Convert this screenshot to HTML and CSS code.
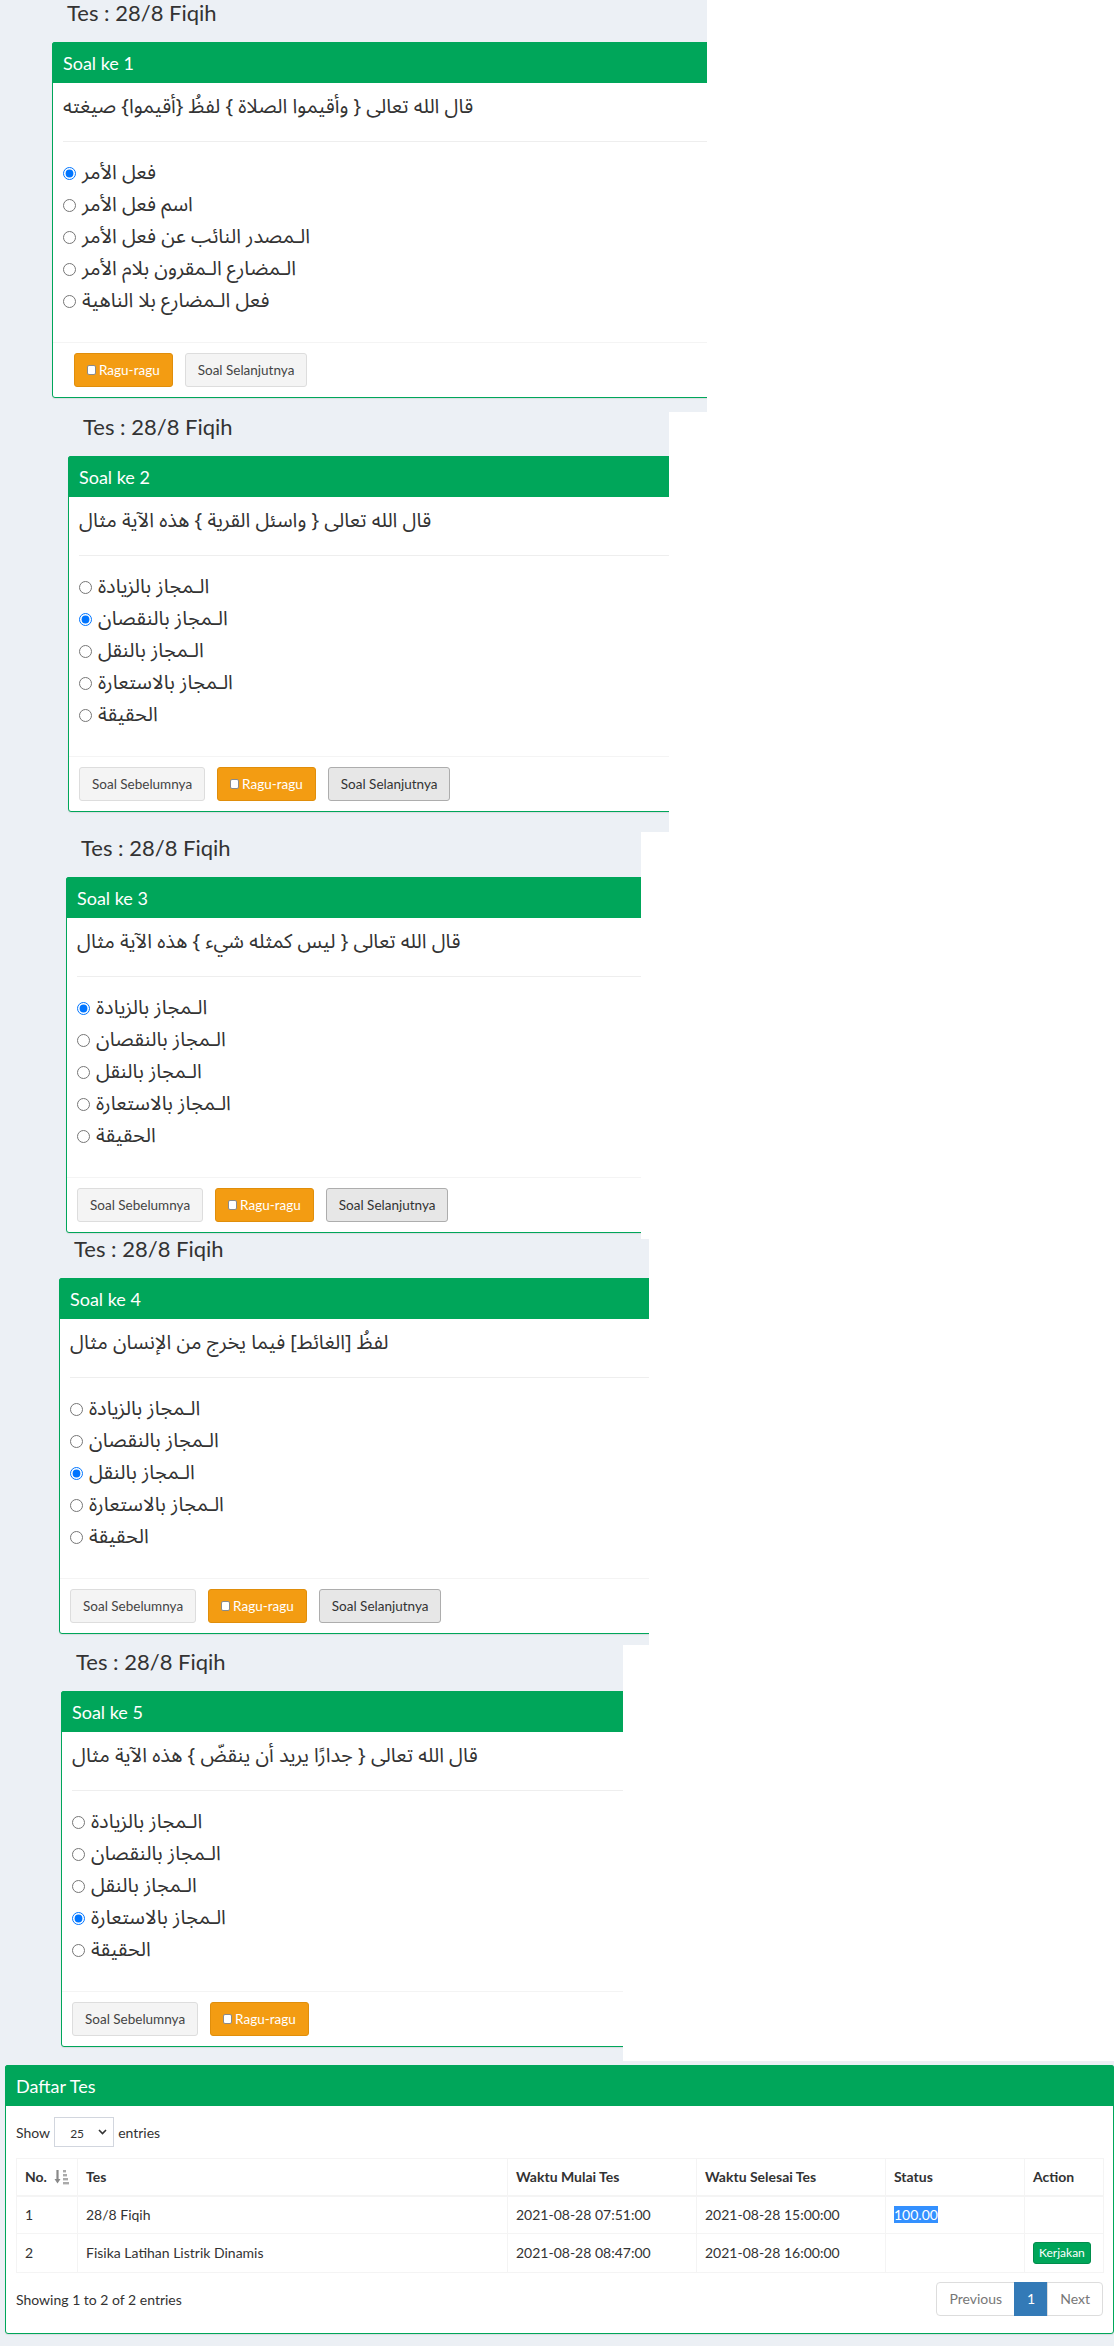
FILE: index.html
```html
<!DOCTYPE html>
<html lang="id">
<head>
<meta charset="utf-8">
<title>Tes : 28/8 Fiqih</title>
<link rel="stylesheet" href="styles.css">
</head>
<body>

<section class="blk blk-1">
  <h3 class="tes-title">Tes : 28/8 Fiqih</h3>
  <div class="box">
    <div class="box-header">Soal ke 1</div>
    <div class="box-body">
      <p class="soal">قال الله تعالى { وأقيموا الصلاة } لفظُ {أقيموا} صيغته</p>
      <hr class="sep">
      <div class="opsi-list">
        <label class="opsi"><input type="radio" name="q1" checked><span class="ar">فعل الأمر</span></label>
        <label class="opsi"><input type="radio" name="q1"><span class="ar">اسم فعل الأمر</span></label>
        <label class="opsi"><input type="radio" name="q1"><span class="ar">الـمصدر النائب عن فعل الأمر</span></label>
        <label class="opsi"><input type="radio" name="q1"><span class="ar">الـمضارع الـمقرون بلام الأمر</span></label>
        <label class="opsi"><input type="radio" name="q1"><span class="ar">فعل الـمضارع بلا الناهية</span></label>
      </div>
    </div>
    <div class="box-footer">
      <button class="btn btn-warning btn-first-gap"><span class="cb"></span>Ragu-ragu</button>
      <button class="btn btn-default">Soal Selanjutnya</button>
    </div>
  </div>
</section>

<section class="blk blk-2">
  <h3 class="tes-title">Tes : 28/8 Fiqih</h3>
  <div class="box">
    <div class="box-header">Soal ke 2</div>
    <div class="box-body">
      <p class="soal">قال الله تعالى { واسئل القرية } هذه الآية مثال</p>
      <hr class="sep">
      <div class="opsi-list">
        <label class="opsi"><input type="radio" name="q2"><span class="ar">الـمجاز بالزيادة</span></label>
        <label class="opsi"><input type="radio" name="q2" checked><span class="ar">الـمجاز بالنقصان</span></label>
        <label class="opsi"><input type="radio" name="q2"><span class="ar">الـمجاز بالنقل</span></label>
        <label class="opsi"><input type="radio" name="q2"><span class="ar">الـمجاز بالاستعارة</span></label>
        <label class="opsi"><input type="radio" name="q2"><span class="ar">الحقيقة</span></label>
      </div>
    </div>
    <div class="box-footer">
      <button class="btn btn-default">Soal Sebelumnya</button>
      <button class="btn btn-warning"><span class="cb"></span>Ragu-ragu</button>
      <button class="btn btn-default btn-active">Soal Selanjutnya</button>
    </div>
  </div>
</section>

<section class="blk blk-3">
  <h3 class="tes-title">Tes : 28/8 Fiqih</h3>
  <div class="box">
    <div class="box-header">Soal ke 3</div>
    <div class="box-body">
      <p class="soal">قال الله تعالى { ليس كمثله شيء } هذه الآية مثال</p>
      <hr class="sep">
      <div class="opsi-list">
        <label class="opsi"><input type="radio" name="q3" checked><span class="ar">الـمجاز بالزيادة</span></label>
        <label class="opsi"><input type="radio" name="q3"><span class="ar">الـمجاز بالنقصان</span></label>
        <label class="opsi"><input type="radio" name="q3"><span class="ar">الـمجاز بالنقل</span></label>
        <label class="opsi"><input type="radio" name="q3"><span class="ar">الـمجاز بالاستعارة</span></label>
        <label class="opsi"><input type="radio" name="q3"><span class="ar">الحقيقة</span></label>
      </div>
    </div>
    <div class="box-footer">
      <button class="btn btn-default">Soal Sebelumnya</button>
      <button class="btn btn-warning"><span class="cb"></span>Ragu-ragu</button>
      <button class="btn btn-default btn-active">Soal Selanjutnya</button>
    </div>
  </div>
</section>

<section class="blk blk-4">
  <h3 class="tes-title">Tes : 28/8 Fiqih</h3>
  <div class="box">
    <div class="box-header">Soal ke 4</div>
    <div class="box-body">
      <p class="soal">لفظُ [الغائط] فيما يخرج من الإنسان مثال</p>
      <hr class="sep">
      <div class="opsi-list">
        <label class="opsi"><input type="radio" name="q4"><span class="ar">الـمجاز بالزيادة</span></label>
        <label class="opsi"><input type="radio" name="q4"><span class="ar">الـمجاز بالنقصان</span></label>
        <label class="opsi"><input type="radio" name="q4" checked><span class="ar">الـمجاز بالنقل</span></label>
        <label class="opsi"><input type="radio" name="q4"><span class="ar">الـمجاز بالاستعارة</span></label>
        <label class="opsi"><input type="radio" name="q4"><span class="ar">الحقيقة</span></label>
      </div>
    </div>
    <div class="box-footer">
      <button class="btn btn-default">Soal Sebelumnya</button>
      <button class="btn btn-warning"><span class="cb"></span>Ragu-ragu</button>
      <button class="btn btn-default btn-active">Soal Selanjutnya</button>
    </div>
  </div>
</section>

<section class="blk blk-5">
  <h3 class="tes-title">Tes : 28/8 Fiqih</h3>
  <div class="box">
    <div class="box-header">Soal ke 5</div>
    <div class="box-body">
      <p class="soal">قال الله تعالى { جدارًا يريد أن ينقضّ } هذه الآية مثال</p>
      <hr class="sep">
      <div class="opsi-list">
        <label class="opsi"><input type="radio" name="q5"><span class="ar">الـمجاز بالزيادة</span></label>
        <label class="opsi"><input type="radio" name="q5"><span class="ar">الـمجاز بالنقصان</span></label>
        <label class="opsi"><input type="radio" name="q5"><span class="ar">الـمجاز بالنقل</span></label>
        <label class="opsi"><input type="radio" name="q5" checked><span class="ar">الـمجاز بالاستعارة</span></label>
        <label class="opsi"><input type="radio" name="q5"><span class="ar">الحقيقة</span></label>
      </div>
    </div>
    <div class="box-footer">
      <button class="btn btn-default">Soal Sebelumnya</button>
      <button class="btn btn-warning"><span class="cb"></span>Ragu-ragu</button>
    </div>
  </div>
</section>

<section class="daftar">
  <div class="box box-wide">
    <div class="box-header">Daftar Tes</div>
    <div class="box-body">
      <div class="dt-length">
        <span>Show</span>
        <span class="select"><span class="select-val">25</span>
          <svg class="chev" width="9" height="6" viewBox="0 0 9 6"><path d="M1 1 L4.5 4.5 L8 1" fill="none" stroke="#333" stroke-width="1.6"/></svg>
        </span>
        <span>entries</span>
      </div>
      <table class="dt">
        <colgroup>
          <col class="c-no"><col class="c-tes"><col class="c-mulai"><col class="c-selesai"><col class="c-status"><col class="c-action">
        </colgroup>
        <thead>
          <tr>
            <th><div class="th-sort"><span>No.</span>
              <svg class="sort-ic" width="15" height="16" viewBox="0 0 15 16">
                <path d="M3.5 1 V12" stroke="#888" stroke-width="2.2" fill="none"/>
                <path d="M0.5 10 L3.5 14.5 L6.5 10 Z" fill="#888"/>
                <rect x="9" y="1" width="3" height="2.4" fill="#aaa"/>
                <rect x="9" y="5" width="4" height="2.4" fill="#aaa"/>
                <rect x="9" y="9" width="5" height="2.4" fill="#aaa"/>
                <rect x="9" y="13" width="6" height="2.4" fill="#aaa"/>
              </svg></div></th>
            <th>Tes</th>
            <th>Waktu Mulai Tes</th>
            <th>Waktu Selesai Tes</th>
            <th>Status</th>
            <th>Action</th>
          </tr>
        </thead>
        <tbody>
          <tr>
            <td>1</td>
            <td>28/8 Fiqih</td>
            <td>2021-08-28 07:51:00</td>
            <td>2021-08-28 15:00:00</td>
            <td><span class="sel">100.00</span></td>
            <td></td>
          </tr>
          <tr>
            <td>2</td>
            <td>Fisika Latihan Listrik Dinamis</td>
            <td>2021-08-28 08:47:00</td>
            <td>2021-08-28 16:00:00</td>
            <td></td>
            <td><button class="btn-xs">Kerjakan</button></td>
          </tr>
        </tbody>
      </table>
      <div class="dt-bottom">
        <div class="dt-info">Showing 1 to 2 of 2 entries</div>
        <ul class="pagination">
          <li class="disabled"><span>Previous</span></li>
          <li class="active"><span>1</span></li>
          <li class="disabled"><span>Next</span></li>
        </ul>
      </div>
    </div>
  </div>
</section>

</body>
</html>
```

FILE: styles.css
```css
html, body {
  margin: 0;
  padding: 0;
}
body {
  background: #ffffff;
  font-family: Lato, "Noto Sans Arabic", "DejaVu Sans", sans-serif;
  font-size: 14px;
  color: #333;
  width: 1114px;
}

/* ---------- test blocks ---------- */
.blk {
  background: #ecf0f5;
  overflow: hidden;
  box-sizing: border-box;
}
.blk-1 { width: 707px; padding: 3px 0 14px 52px; }
.blk-2 { width: 669px; padding: 5px 0 20px 68px; }
.blk-3 { width: 641px; padding: 6px 0 6px 66px; }
.blk-4 { width: 649px; padding: 0 0 11px 59px; }
.blk-5 { width: 623px; padding: 7px 0 14px 61px; }

.tes-title {
  margin: 0 0 19px 15px;
  font-size: 22px;
  line-height: 20px;
  height: 20px;
  font-weight: 400;
  color: #333;
}

.box {
  background: #fff;
  border: 1px solid #00a65a;
  border-radius: 3px;
  margin-right: -40px;
  box-shadow: 0 1px 1px rgba(0,0,0,0.08);
}
.box-header {
  background: #00a65a;
  color: #fff;
  padding: 10px;
  font-size: 18px;
  line-height: 20px;
  margin: -1px -1px 0 -1px;
  border: 1px solid #00a65a;
  border-bottom: 0;
  border-radius: 3px 3px 0 0;
}
.box-body {
  padding: 10px;
}
.soal {
  margin: 0;
  font-family: "Noto Sans Arabic", "Noto Naskh Arabic", "DejaVu Sans", sans-serif;
  font-size: 20px;
  line-height: 28px;
  height: 28px;
  color: #333;
  white-space: nowrap;
}
.sep {
  margin: 20px 0 15px 0;
  border: 0;
  border-top: 1px solid #eee;
  height: 0;
}
.opsi-list {
  margin-bottom: 15px;
}
.opsi {
  display: flex;
  align-items: center;
  height: 32px;
  gap: 6px;
}
.opsi input {
  margin: 0;
  width: 13px;
  height: 13px;
  flex: none;
}
.ar {
  font-family: "Noto Sans Arabic", "Noto Naskh Arabic", "DejaVu Sans", sans-serif;
  font-size: 20px;
  line-height: 28px;
  color: #333;
  white-space: nowrap;
}

.box-footer {
  border-top: 1px solid #f4f4f4;
  padding: 10px;
  display: flex;
  gap: 12px;
}
.btn {
  font-family: Lato, sans-serif;
  font-size: 13.5px;
  line-height: 20px;
  height: 34px;
  padding: 6px 12px;
  border-radius: 3px;
  border: 1px solid #ddd;
  display: inline-flex;
  align-items: center;
  box-sizing: border-box;
  cursor: pointer;
}
.btn-default {
  background: #f4f4f4;
  color: #444;
  border-color: #ddd;
}
.btn-active {
  background: #e7e7e7;
  border-color: #adadad;
  color: #333;
}
.btn-warning {
  background: #f39c12;
  border-color: #e08e0b;
  color: #fff;
}
.btn-first-gap {
  margin-left: 11px;
}
.cb {
  display: inline-block;
  width: 9px;
  height: 10px;
  background: #fff;
  border: 1px solid #8a8a8a;
  border-radius: 2px;
  margin-right: 3px;
  box-sizing: border-box;
}

/* ---------- daftar tes ---------- */
.daftar {
  background: #ecf0f5;
  padding: 4px 0 12px 5px;
  overflow: hidden;
}
.box-wide {
  margin-right: 0;
}
.dt-length {
  display: flex;
  align-items: center;
  height: 32px;
  gap: 4px;
}
.select {
  display: inline-flex;
  align-items: center;
  justify-content: space-between;
  box-sizing: border-box;
  width: 60px;
  height: 30px;
  border: 1px solid #d2d6de;
  padding: 0 6px 0 15px;
  font-size: 12px;
  background: #fff;
}
.select-val {
  padding-top: 3px;
}
.chev {
  display: block;
}

.dt {
  margin-top: 10px;
  width: 1087px;
  border-collapse: collapse;
  table-layout: fixed;
  border: 1px solid #f4f4f4;
}
.c-no { width: 61px; }
.c-tes { width: 430px; }
.c-mulai { width: 189px; }
.c-selesai { width: 189px; }
.c-status { width: 139px; }
.c-action { width: 79px; }
.dt th, .dt td {
  border: 1px solid #f4f4f4;
  padding: 8px;
  line-height: 20px;
  text-align: left;
  vertical-align: middle;
  white-space: nowrap;
  overflow: hidden;
}
.dt th {
  font-weight: 700;
  border-bottom-width: 2px;
}
.th-sort {
  display: flex;
  align-items: center;
  justify-content: space-between;
}
.sort-ic {
  display: block;
}
.sel {
  background: #3390ff;
  color: #fff;
}
.btn-xs {
  font-family: Lato, sans-serif;
  font-size: 12px;
  line-height: 18px;
  padding: 1px 5px;
  background: #00a65a;
  border: 1px solid #008d4c;
  color: #fff;
  border-radius: 3px;
  cursor: pointer;
  vertical-align: middle;
}

.dt-bottom {
  display: flex;
  align-items: center;
  justify-content: space-between;
  margin-top: 9px;
  margin-bottom: 7px;
}
.pagination {
  list-style: none;
  margin: 0;
  padding: 0;
  display: flex;
}
.pagination li span {
  display: block;
  padding: 6px 12px;
  line-height: 20px;
  border: 1px solid #ddd;
  margin-left: -1px;
  background: #fff;
  color: #777;
}
.pagination li:first-child span {
  margin-left: 0;
  border-radius: 4px 0 0 4px;
}
.pagination li:last-child span {
  border-radius: 0 4px 4px 0;
}
.pagination li.active span {
  background: #337ab7;
  border-color: #337ab7;
  color: #fff;
}
```
